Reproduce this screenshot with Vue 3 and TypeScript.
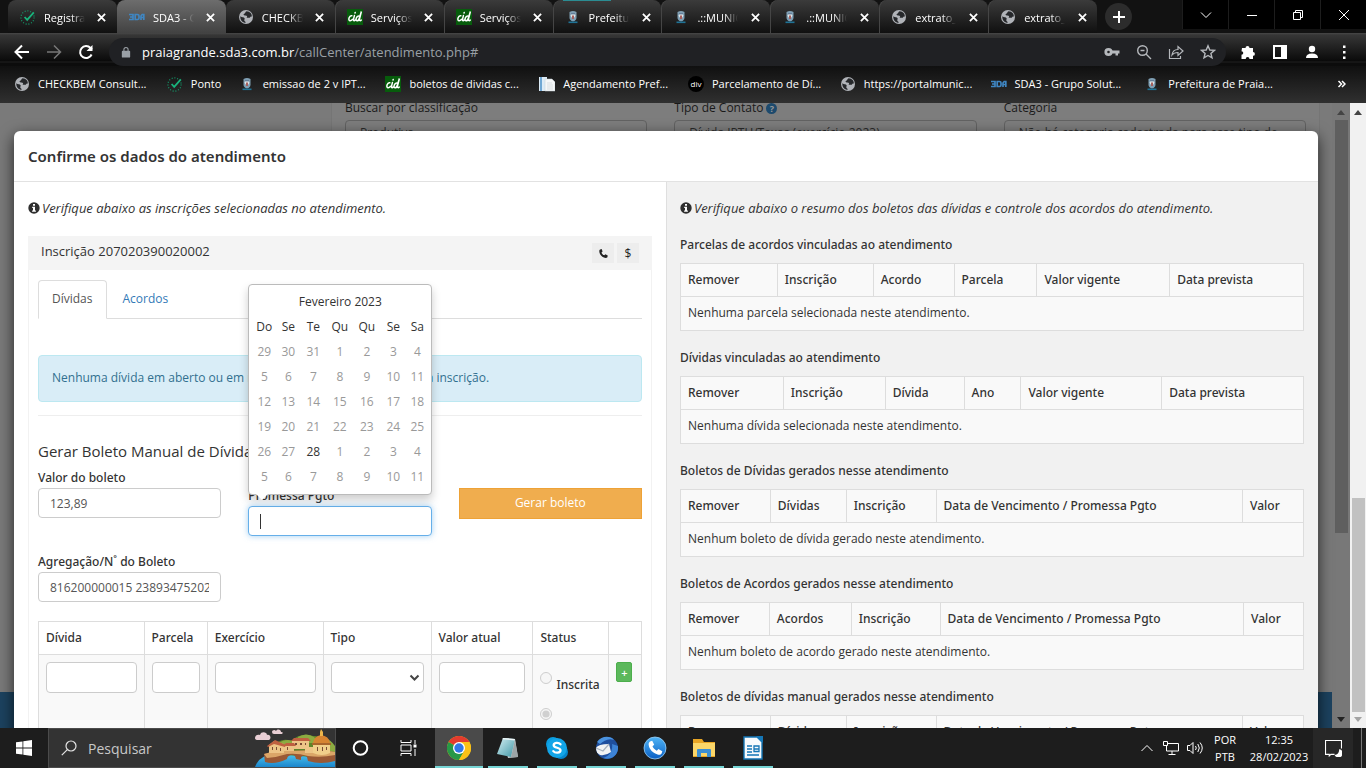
<script setup lang="ts">
interface Tab { icon: string; title: string; active?: boolean }
interface Summary { title: string; empty: string; cols: { label: string; w: number }[] }

const tabs: Tab[] = [
  { icon: 'check', title: 'Registrar ponto' },
  { icon: 'sda', title: 'SDA3 - Grupo Solution', active: true },
  { icon: 'globe', title: 'CHECKBEM Consulta' },
  { icon: 'cid', title: 'Serviços Online' },
  { icon: 'cid', title: 'Serviços Online' },
  { icon: 'crest', title: 'Prefeitura de Praia' },
  { icon: 'crest', title: '.::MUNICIPIO::.' },
  { icon: 'crest', title: '.::MUNICIPIO::.' },
  { icon: 'globe', title: 'extrato_debitos' },
  { icon: 'globe', title: 'extrato_debitos' },
]

const bookmarks = [
  { icon: 'globe', title: 'CHECKBEM Consult...' },
  { icon: 'check', title: 'Ponto' },
  { icon: 'crest', title: 'emissao de 2 v IPT...' },
  { icon: 'cid', title: 'boletos de dividas c...' },
  { icon: 'doc', title: 'Agendamento Pref...' },
  { icon: 'div', title: 'Parcelamento de Dí...' },
  { icon: 'globe', title: 'https://portalmunic...' },
  { icon: 'sda', title: 'SDA3 - Grupo Solut...' },
  { icon: 'crest', title: 'Prefeitura de Praia...' },
]

const filters = [
  { id: 'classificacao', label: 'Buscar por classificação', value: 'Produtiva', help: false },
  { id: 'contato', label: 'Tipo de Contato', value: 'Dívida IPTU/Taxas (exercício 2023)', help: true },
  { id: 'categoria', label: 'Categoria', value: 'Não há categoria cadastrada para esse tipo de', help: false },
]

const cols = (labels: string[], ws: number[]) => labels.map((label, i) => ({ label, w: ws[i] }))
const boletoCols = (second: string, ws: number[]) =>
  cols(['Remover', second, 'Inscrição', 'Data de Vencimento / Promessa Pgto', 'Valor'], ws)

const summaries: Summary[] = [
  {
    title: 'Parcelas de acordos vinculadas ao atendimento',
    empty: 'Nenhuma parcela selecionada neste atendimento.',
    cols: cols(['Remover', 'Inscrição', 'Acordo', 'Parcela', 'Valor vigente', 'Data prevista'], [97, 96, 81, 83, 133, 134]),
  },
  {
    title: 'Dívidas vinculadas ao atendimento',
    empty: 'Nenhuma dívida selecionada neste atendimento.',
    cols: cols(['Remover', 'Inscrição', 'Dívida', 'Ano', 'Valor vigente', 'Data prevista'], [103, 102, 79, 57, 141, 142]),
  },
  {
    title: 'Boletos de Dívidas gerados nesse atendimento',
    empty: 'Nenhum boleto de dívida gerado neste atendimento.',
    cols: boletoCols('Dívidas', [90, 76, 90, 307, 61]),
  },
  {
    title: 'Boletos de Acordos gerados nesse atendimento',
    empty: 'Nenhum boleto de acordo gerado neste atendimento.',
    cols: boletoCols('Acordos', [89, 82, 89, 304, 60]),
  },
  {
    title: 'Boletos de dívidas manual gerados nesse atendimento',
    empty: 'Nenhum boleto manual gerado neste atendimento.',
    cols: boletoCols('Dívidas', [90, 76, 90, 307, 61]),
  },
]

const share = (s: Summary, w: number) => ({ width: (w / s.cols.reduce((a, c) => a + c.w, 0)) * 100 + '%' })

const weekdays = ['Do', 'Se', 'Te', 'Qu', 'Qu', 'Se', 'Sa']
const weeks = [
  [29, 30, 31, 1, 2, 3, 4],
  [5, 6, 7, 8, 9, 10, 11],
  [12, 13, 14, 15, 16, 17, 18],
  [19, 20, 21, 22, 23, 24, 25],
  [26, 27, 28, 1, 2, 3, 4],
  [5, 6, 7, 8, 9, 10, 11],
]

const apps = ['chrome', 'notepad', 'skype', 'thunderbird', 'phoneapp', 'folder', 'writer']
</script>

<template>
  <svg class="sprite" aria-hidden="true">
    <defs>
      <linearGradient id="gBlue" x1="0" y1="0" x2="0" y2="1"><stop offset="0" stop-color="#4fb4f5" /><stop offset="1" stop-color="#0a5fc4" /></linearGradient>
      <linearGradient id="gNote" x1="0" y1="0" x2="1" y2="1"><stop offset="0" stop-color="#d6f0f4" /><stop offset="1" stop-color="#3f97a6" /></linearGradient>
      <linearGradient id="gSea" x1="0" y1="0" x2="0" y2="1"><stop offset="0" stop-color="#4cc3ee" /><stop offset="1" stop-color="#1b86cc" /></linearGradient>
    </defs>
    <symbol id="check" viewBox="0 0 16 16"><circle cx="7.500" cy="8.500" r="6.600" fill="none" stroke="#129b6b" stroke-width="1.200" stroke-dasharray="1 1.800" /><path d="M4.600 8l2.600 2.800L13.800 3.400" fill="none" stroke="#19b37c" stroke-width="1.800" /></symbol>
    <symbol id="sda" viewBox="0 0 16 16"><path d="M0 5.500h4v5H0M1 8h3M6.200 5.500h2.300q1.500 0 1.500 1.500v2q0 1.500-1.500 1.500H6.200zM12 11V7l1.200-1.500h1.600V11M12 8.500h3" fill="none" stroke="#3f86c2" stroke-width="1.700" /></symbol>
    <symbol id="globe" viewBox="0 0 16 16"><circle cx="8" cy="8" r="7" fill="#b0b3b8" /><path d="M8.500 2.200c-1.800.8-.7 2-2.300 2.600-1.400.6-.4 1.900.9 1.800 2.200-.1 2.600 1 1.500 2.100h3.200c.6-1.200 1.200-1.300 2-1 .3-2.700-1.500-5.200-5.300-5.500zM2.300 7.200c1.500 1.600 3.700.6 4.300 2.100.3 1-.6 1.600-.2 2.500.3.900 1.300.7 1.300 2-3.200 0-5.700-2.800-5.400-6.600z" fill="#26282b" /></symbol>
    <symbol id="cid" viewBox="0 0 16 16"><rect width="16" height="16" fill="#075c0c" /><path d="M4.800 6.800c-2.200-.8-4.300 4.200-1.800 5 1 .2 1.800-.6 2.400-1.400M7.400 6.600l-1 4c-.2 1.500 1.200 1.300 2 .2M8 4.100l.2-.6M12.400 7.200c-2.600-1.200-4.600 4.200-2.400 4.600 1.200.2 2.200-2 2.600-3.600l1.800-5.700-2 7.800c-.2 1.600 1 1.600 1.800.8" fill="none" stroke="#fff" stroke-width="1.500" stroke-linecap="round" /></symbol>
    <symbol id="crest" viewBox="0 0 16 16"><path d="M4.500 3q3.500-2 7 0v5.500q0 3-3.500 4-3.500-1-3.500-4z" fill="#7f9fb4" /><circle cx="8" cy="6.500" r="2.300" fill="#dfe6e8" /><path d="M6 4h4v1.400H6z" fill="#657f99" /><path d="M7 6.500h2v3.500H7z" fill="#a5605e" /><path d="M3.500 13.300h9" stroke="#1f7396" stroke-width="1.600" fill="none" /></symbol>
    <symbol id="doc" viewBox="0 0 16 16"><path d="M0 1h8v14H0z" fill="#dcebf6" /><path d="M1 1h2v14H1z" fill="#6fa7d3" /><path d="M6 3h7l3 3v9H6z" fill="#f5f7f8" stroke="#c3cdd4" stroke-width=".5" /><path d="M8 7h5M8 9h6M8 11h6M8 13h6" stroke="#cdd3d8" stroke-width=".7" /></symbol>
    <symbol id="div" viewBox="0 0 16 16"><circle cx="8" cy="8" r="8" fill="#000" /><text x="8" y="11" text-anchor="middle" font-size="8" font-family="Open Sans" fill="#fff">div</text></symbol>
    <symbol id="info" viewBox="0 0 12 12"><circle cx="6" cy="6" r="5.700" fill="#2e2e2e" /><path d="M5 2h2v1.700H5zM4.200 4.700H7v3.700h.9v1.400H4.100V8.400H5V6.100h-.8z" fill="#fff" /></symbol>
    <symbol id="phone" viewBox="0 0 12 12"><path d="M2.300 1.500L4 1.200l1 2.600-1.200 1c.6 1.500 1.500 2.500 3.100 3.200L8 6.900l2.600 1.200-.3 1.800c-.3.7-1 .9-1.900.9C4.600 10.600 1.400 7 1.400 3.200c0-.8.3-1.500.9-1.700z" fill="#222" /></symbol>
    <symbol id="chrome" viewBox="0 0 24 24"><circle cx="12" cy="12" r="12" fill="#fbc116" /><path d="M12 12L1.600 6A12 12 0 0 1 22.400 6z" fill="#e33b2e" /><path d="M1.600 6A12 12 0 0 0 12 24l5.200-9L12 12z" fill="#279847" /><path d="M12 6h10.400A12 12 0 0 1 12 24l5.200-9z" fill="#fbc116" /><circle cx="12" cy="12" r="6" fill="#fff" /><circle cx="12" cy="12" r="4.700" fill="#3177e8" /></symbol>
    <symbol id="notepad" viewBox="0 0 24 24"><path d="M7 2l12 1 3 18-10 1z" fill="#c9d0d2" /><path d="M7 2l12 1-4 18L1 18z" fill="url(#gNote)" /><path d="M7 2l12 1-.5 1.500L6.300 3.300z" fill="#eef6f7" /><path d="M19 4l3 17-7 .5z" fill="#9da5a7" /></symbol>
    <symbol id="skype" viewBox="0 0 24 24"><circle cx="8" cy="8" r="7" fill="#0a9de0" /><circle cx="16" cy="16" r="7" fill="#0585cc" /><circle cx="12" cy="12" r="10" fill="#12a5e8" /><path d="M15.500 8.300C13.500 6 8.500 6.500 8.700 9.300c.2 3 6.800 1.900 6.800 5 0 2.900-5.300 3.200-7.200.8" fill="none" stroke="#fff" stroke-width="2.300" stroke-linecap="round" /></symbol>
    <symbol id="thunderbird" viewBox="0 0 24 24"><circle cx="13" cy="12" r="11" fill="#1f4f9e" /><path d="M24 10c1 9-7 15-15 12 7-2 10-8 9-14z" fill="#3d83d6" /><path d="M3 6C8-1 17 0 20 4c-6-2-10 1-14 4z" fill="#4b93e0" /><path d="M2 12q2-4 13-4l2 8q-5 4-11 3-4-2-4-7z" fill="#f2f3f4" /><path d="M2 12l7 3 6-7" fill="none" stroke="#a9b3bf" stroke-width="1.200" /></symbol>
    <symbol id="phoneapp" viewBox="0 0 24 24"><circle cx="12" cy="12" r="11" fill="url(#gBlue)" stroke="#9ad0f7" stroke-width=".8" /><path d="M7 5.500l2.200-.7 2 4-1.700 1.500c.9 2 2.200 3.500 4.300 4.400l1.600-1.600 3.900 2.200-.7 2.300c-.8 1.300-2.300 1.500-4 1-4.700-1.400-8.200-5-8.900-9.500-.2-1.600.2-2.900 1.300-3.600z" fill="#fff" /></symbol>
    <symbol id="folder" viewBox="0 0 24 24"><path d="M1 3h9l2 3h11v15H1z" fill="#e8a525" /><path d="M1 7h22v13H1z" fill="#fbd669" /><path d="M5 21v-7q0-1 1-1h12q1 0 1 1v7h-4v-4H9v4z" fill="#3c8fd3" /></symbol>
    <symbol id="writer" viewBox="0 0 24 24"><path d="M3 1h13l5 5v17H3z" fill="#f7fafc" stroke="#1576b5" stroke-width="1.400" /><path d="M15 0h7v7z" fill="#1576b5" /><path d="M6 10h5M6 13h5M6 16h5M6 19h12M13 10h5v5.500h-5zM13 13h5" stroke="#1576b5" stroke-width="1.300" fill="none" /></symbol>
  </svg>

  <div class="screen">
    <header class="chrome">
      <div class="tabstrip">
        <div class="tabs">
          <div v-for="(t, i) in tabs" :key="i" class="tab" :class="{ active: t.active, sep: i > 2 }">
            <svg class="fav"><use :href="'#' + t.icon" /></svg>
            <span class="tabtitle">{{ t.title }}</span>
            <button class="close" aria-label="Fechar guia"><svg viewBox="0 0 10 10"><path d="M1 1l8 8M9 1L1 9" /></svg></button>
          </div>
        </div>
        <button class="newtab" aria-label="Nova guia"><svg viewBox="0 0 12 12"><path d="M6 0v12M0 6h12" /></svg></button>
        <div class="winbtns">
          <button aria-label="Pesquisar guias"><svg viewBox="0 0 12 12"><path d="M1 3.500l5 5 5-5" /></svg></button>
          <button aria-label="Minimizar"><svg viewBox="0 0 12 12"><path d="M1 6.500h10" /></svg></button>
          <button aria-label="Restaurar"><svg viewBox="0 0 12 12"><path d="M1.500 3.500h7v7h-7zM3.500 3.500v-2h7v7h-2" /></svg></button>
          <button aria-label="Fechar"><svg viewBox="0 0 12 12"><path d="M1 1l10 10M11 1L1 11" /></svg></button>
        </div>
      </div>
      <div class="toolbar">
        <button aria-label="Voltar"><svg viewBox="0 0 16 16" class="ic white"><path d="M15 8H2M8 1.500L1.500 8 8 14.500" /></svg></button>
        <button aria-label="Avançar"><svg viewBox="0 0 16 16" class="ic dim"><path d="M1 8h13M8 1.500L14.500 8 8 14.500" /></svg></button>
        <button aria-label="Recarregar"><svg viewBox="0 0 16 16" class="ic white"><path d="M13.600 10.500A6 6 0 1 1 12.500 4L14 5.500" /><path d="M14.500 1v6h-6z" class="solid" /></svg></button>
        <div class="omnibox">
          <svg class="lock" viewBox="0 0 12 14"><path d="M2 5h8q1 0 1 1v6q0 1-1 1H2q-1 0-1-1V6q0-1 1-1z" fill="#9aa0a6" /><path d="M3.500 6V3.500a2.500 2.500 0 0 1 5 0V6" fill="none" stroke="#9aa0a6" stroke-width="1.300" /></svg>
          <span class="url"><b>praiagrande.sda3.com.br</b>/callCenter/atendimento.php#</span>
          <button aria-label="Senhas"><svg viewBox="0 0 16 16" class="ic grey"><path d="M8 6.500h7.500v3H14v2h-2.500v-2H8z" class="solid" /><circle cx="4.500" cy="8" r="2.700" stroke-width="2.800" /></svg></button>
          <button aria-label="Zoom"><svg viewBox="0 0 16 16" class="ic grey"><circle cx="6.500" cy="6.500" r="4.800" /><path d="M10 10l5 5M4.500 6.500h4" /></svg></button>
          <button aria-label="Compartilhar"><svg viewBox="0 0 16 16" class="ic grey thin"><path d="M1.500 5v9.500h11V12M4 11c.5-4 3-5.500 6-5.500V2.500L15 7l-5 4.500V8.500c-3 0-4.500.5-6 2.500z" /></svg></button>
          <button aria-label="Favorito"><svg viewBox="0 0 16 16" class="ic grey"><path d="M8 1.800l1.800 4.200 4.600.4-3.500 3 1.100 4.500L8 11.500l-4 2.400 1.100-4.500-3.500-3 4.600-.4z" /></svg></button>
        </div>
        <button aria-label="Extensões"><svg viewBox="0 0 16 16" class="ic white"><path d="M2 4h3.500a2 2 0 1 1 4 0H13v4a1.900 1.900 0 1 1 0 3.800V15H9.500a1.900 1.900 0 1 0-3.800 0H1.500v-4.200a1.800 1.800 0 1 0 0-3.600z" class="solid" /></svg></button>
        <button aria-label="Painel lateral"><svg viewBox="0 0 16 16" class="ic white"><path d="M2 2h12v12H2z" stroke-width="2" /><path d="M9 2h5v12H9z" class="solid" /></svg></button>
        <button class="avatar" aria-label="Perfil"><svg viewBox="0 0 16 16" class="ic white"><circle cx="8" cy="5" r="3.200" class="solid" /><path d="M2 14q0-4.500 6-4.500t6 4.500z" class="solid" /></svg></button>
        <button aria-label="Menu"><svg viewBox="0 0 16 16" class="ic white"><path d="M7 1.500h2.500v2.500H7zM7 7h2.500v2.500H7zM7 12.500h2.500V15H7z" class="solid" /></svg></button>
      </div>
      <nav class="bookmarks">
        <a v-for="b in bookmarks" :key="b.title" href="#"><svg class="fav"><use :href="'#' + b.icon" /></svg>{{ b.title }}</a>
        <button class="more" aria-label="Mais favoritos"><svg viewBox="0 0 8 8"><path d="M1 1l3 3-3 3M4.500 1l3 3-3 3" /></svg></button>
      </nav>
    </header>

    <main class="page">
      <div class="under">
        <div class="underpanel">
          <div v-for="f in filters" :key="f.id" class="filter">
            <label :for="f.id">{{ f.label }}</label><span v-if="f.help" class="help">?</span>
            <select :id="f.id" disabled><option>{{ f.value }}</option></select>
          </div>
        </div>
        <div class="footerbar"></div>
      </div>
      <div class="bar inner"><i class="up"></i><span class="track"><b></b></span><i class="down"></i></div>
      <div class="bar outer"><i class="up"></i><span class="track"><b></b></span><i class="down off"></i></div>

      <section class="modal" role="dialog" aria-labelledby="modal-title">
        <h1 id="modal-title">Confirme os dados do atendimento</h1>
        <div class="columns">
          <div class="left">
            <p class="note"><svg><use href="#info" /></svg><em>Verifique abaixo as inscrições selecionadas no atendimento.</em></p>
            <div class="panel">
              <div class="panelhead">
                <span>Inscrição 207020390020002</span>
                <button aria-label="Telefone"><svg><use href="#phone" /></svg></button>
                <button aria-label="Valores">$</button>
              </div>
              <div class="panelbody">
                <div class="navtabs"><a href="#" class="on">Dívidas</a><a href="#">Acordos</a></div>
                <div class="alert">Nenhuma dívida em aberto ou em negociação foi encontrada para a inscrição.</div>
                <hr />
                <h2>Gerar Boleto Manual de Dívida</h2>
                <div class="formrow">
                  <div class="field"><label for="valor">Valor do boleto</label><input id="valor" type="text" value="123,89" /></div>
                  <div class="field date">
                    <label for="promessa">Promessa Pgto</label>
                    <div class="focused"><input id="promessa" type="text" /><span class="caret"></span></div>
                    <div class="calendar">
                      <table>
                        <colgroup><col class="w24" /><col class="w24" /><col class="w26" /><col class="w27" /><col class="w27" /><col class="w26" /><col class="w22" /></colgroup>
                        <thead>
                          <tr><th colspan="7">Fevereiro 2023</th></tr>
                          <tr><th v-for="(d, i) in weekdays" :key="i">{{ d }}</th></tr>
                        </thead>
                        <tbody>
                          <tr v-for="(w, i) in weeks" :key="i"><td v-for="d in w" :key="d" :class="{ today: d === 28 }">{{ d }}</td></tr>
                        </tbody>
                      </table>
                    </div>
                  </div>
                  <button class="generate">Gerar boleto</button>
                </div>
                <div class="formrow second">
                  <div class="field"><label for="agregacao">Agregação/N˚ do Boleto</label><input id="agregacao" type="text" value="816200000015 238934752029 302280000000" /></div>
                </div>
                <table class="grid debts">
                  <colgroup><col class="c1" /><col class="c2" /><col class="c3" /><col class="c4" /><col class="c5" /><col class="c6" /><col class="c7" /></colgroup>
                  <thead><tr><th>Dívida</th><th>Parcela</th><th>Exercício</th><th>Tipo</th><th>Valor atual</th><th>Status</th><th></th></tr></thead>
                  <tbody>
                    <tr>
                      <td><input type="text" aria-label="Dívida" /></td>
                      <td><input type="text" aria-label="Parcela" /></td>
                      <td><input type="text" aria-label="Exercício" /></td>
                      <td>
                        <div class="selectbox">
                          <select aria-label="Tipo"><option></option></select>
                          <svg viewBox="0 0 10 7"><path d="M1 1.500l4 4 4-4" /></svg>
                        </div>
                      </td>
                      <td><input type="text" aria-label="Valor atual" /></td>
                      <td>
                        <label class="radio"><input type="radio" name="status" disabled /><span>Inscrita</span></label>
                        <label class="radio next"><input type="radio" name="status" checked disabled /></label>
                      </td>
                      <td><button class="add">+</button></td>
                    </tr>
                  </tbody>
                </table>
              </div>
            </div>
          </div>
          <div class="right">
            <p class="note"><svg><use href="#info" /></svg><em>Verifique abaixo o resumo dos boletos das dívidas e controle dos acordos do atendimento.</em></p>
            <section v-for="s in summaries" :key="s.title" class="summary">
              <h3>{{ s.title }}</h3>
              <table class="grid">
                <colgroup><col v-for="c in s.cols" :key="c.label" :style="share(s, c.w)" /></colgroup>
                <thead><tr><th v-for="c in s.cols" :key="c.label">{{ c.label }}</th></tr></thead>
                <tbody><tr><td :colspan="s.cols.length">{{ s.empty }}</td></tr></tbody>
              </table>
            </section>
          </div>
        </div>
      </section>
    </main>

    <footer class="taskbar">
      <button class="start" aria-label="Iniciar"><svg viewBox="0 0 16 16"><path d="M0 2.300l6.500-.9v6.100H0zM7.300 1.300L16 0v7.500H7.300zM0 8.400h6.500v6.200L0 13.700zM7.300 8.400H16V16l-8.700-1.200z" fill="#fff" /></svg></button>
      <div class="search">
        <svg class="lens" viewBox="0 0 16 16"><circle cx="10" cy="6" r="5" /><path d="M6.300 9.700L0.800 15.200" /></svg>
        <input type="text" aria-label="Pesquisar" placeholder="Pesquisar" />
        <svg class="island" viewBox="0 0 80 38">
          <path d="M0 9c0-3 3-4 5-3 1-4 7-3 7 0 3-1 5 3 2 5H3Q0 11 0 9zM17 3c0-2 3-3 4-1 2-3 5-1 5 1q3 0 1 2h-8q-2 0-2-2z" fill="#e9cfd5" />
          <path d="M17 18Q26 8 36 12 46 3 58 7q14-1 22 12v14H18z" fill="#5f8429" />
          <path d="M22 15q10-7 18-2l5 4H18zM43 8q8-5 16 0l5 6H44zM70 9q6 2 10 8v6H68z" fill="#8cab41" />
          <path d="M0 38q5-14 24-13 26 3 56 4v9z" fill="url(#gSea)" />
          <path d="M9 25q12-4 23-3l36-1 12 2v9q-14 4-27 0l-1-4q-3-3-6 0v3l-5-1q-1-5-5-4-4 1-4 4-12 6-22 3z" fill="#9a5935" />
          <path d="M9 25q12-4 23-3l36-1 12 2v3q-14 3-27 1-10-3-21-2-9 3-20 4z" fill="#dba668" />
          <path d="M14 16l5-4 10 3v9H14zM37 11h17v9H37zM29 16h10v6H29zM50 18h10v6H50z" fill="#edc587" />
          <path d="M12 17l8-6 11 5-1 2-11-3-6 3zM36 12l3-3h14l3 3zM28 17l3-3h8l2 3z" fill="#bf6040" />
          <path d="M58 15h17v9q-8 4-17 0z" fill="#f1cf8b" /><path d="M58 14q1-7 8-8 8 1 9 8z" fill="#d78432" /><path d="M65 3l1-3 2 3v4h-3z" fill="#edb54b" /><path d="M57 14h19v2H57z" fill="#a9652c" />
          <path d="M17 18h1v3h-1zM21 18h1v3h-1zM25 19h1v3h-1zM40 14h2v2h-2zM45 14h2v2h-2zM50 14h1v2h-1zM32 18h1v3h-1zM62 18h1v4h-1zM67 18h1v4h-1zM71 18h1v3h-1z" fill="#7a4b36" />
        </svg>
      </div>
      <button class="tb" aria-label="Cortana"><svg viewBox="0 0 16 16"><circle cx="8" cy="8" r="6.800" fill="none" stroke="#fff" stroke-width="2" /></svg></button>
      <button class="tb" aria-label="Visão de tarefas"><svg viewBox="0 0 16 16"><path d="M.5 0v2.500h10V0M.5 5h10v6H.5zM.5 16v-2.500h10V16M14.500 0v4M14.500 9v7" fill="none" stroke="#fff" /><path d="M13 4.500h3v3h-3z" fill="#fff" /></svg></button>
      <div class="apps">
        <button v-for="(a, i) in apps" :key="a" :class="{ current: i === 0 }" :aria-label="a"><svg><use :href="'#' + a" /></svg></button>
      </div>
      <div class="tray">
        <button aria-label="Ícones ocultos"><svg viewBox="0 0 16 16"><path d="M2.500 11L8 5.500l5.500 5.500" /></svg></button>
        <button aria-label="Rede"><svg viewBox="0 0 16 16"><path d="M4 3.500h11.500v7.500H3.500V6M.5 1.500h4v4h-4zM9 11v3.500M5.500 14.500h7" /></svg></button>
        <button aria-label="Volume"><svg viewBox="0 0 16 16"><path d="M.5 5.500h2.500l3-3v11l-3-3H.5zM8.500 6q1.500 2 0 4M10.800 4q3 4 0 8M13 2.500q4.500 5.500 0 11" /></svg></button>
      </div>
      <div class="lang"><span>POR</span><span>PTB</span></div>
      <div class="clock"><span>12:35</span><span>28/02/2023</span></div>
      <button class="notif" aria-label="Notificações"><svg viewBox="0 0 16 16"><path d="M9 13.500l-3.500 0-1.500 1.500v-1.500H.5v-13h15V8" fill="none" stroke="#fff" /><path d="M13.500 8.500a4 4 0 1 1-4.500 5.500q4 0 4.500-5.500z" fill="#fff" /></svg></button>
      <div class="peek"></div>
    </footer>
  </div>
</template>

<style>
html, body { margin: 0; overflow: hidden; background: #7d7d7d; }
</style>

<style scoped>
* { box-sizing: border-box; }
button { border: 0; padding: 0; margin: 0; background: none; font: inherit; color: inherit; display: flex; align-items: center; justify-content: center; flex: none; }
a { text-decoration: none; color: inherit; }
svg { flex: none; display: block; }
.sprite { position: absolute; width: 0; height: 0; }
.screen { height: 100vh; display: flex; flex-direction: column; overflow: hidden; font-family: "Open Sans", "Noto Sans", sans-serif; font-size: 12px; color: #333; }

.chrome { flex: none; color: #fff; font-size: 11px; background: #161616; }
.tabstrip { height: 33px; display: flex; padding-left: 8px; background: #121212; }
.tabs { display: flex; flex: 0 1 1089px; min-width: 0; height: 33px; }
.tab { flex: 1 1 0; min-width: 0; display: flex; align-items: center; padding: 1px 10px 0 12px; background: linear-gradient(#3b3b3b, #101010); border-radius: 8px 8px 0 0; }
.tab.sep { box-shadow: inset 1px 0 #454545; }
.tab.active { background: linear-gradient(#6d6d6d, #424242); }
.tab:nth-child(6) { background: linear-gradient(#2b8c92, #2b8c92) 10px 0 / 48px 1px no-repeat, linear-gradient(#3b3b3b, #101010); }
.fav { width: 16px; height: 16px; margin-right: 8px; }
.tabtitle { flex: 1; min-width: 0; overflow: hidden; white-space: nowrap; -webkit-mask-image: linear-gradient(90deg, #000 65%, transparent); mask-image: linear-gradient(90deg, #000 65%, transparent); }
.close { width: 10px; height: 10px; margin-left: 12px; }
.close svg { width: 9px; height: 9px; fill: none; stroke: #fff; stroke-width: 2; }
.newtab { width: 27px; height: 27px; border-radius: 50%; background: #2c2c2c; margin: 3px 0 0 8px; }
.newtab svg { width: 12px; height: 12px; stroke: #fff; stroke-width: 2; }
.winbtns { margin-left: auto; display: flex; height: 29px; background: #000; }
.winbtns button { width: 46px; border-left: 1px solid #1d1d1d; }
.winbtns svg { width: 12px; height: 12px; fill: none; stroke: #fff; }
.toolbar { height: 33px; display: flex; align-items: center; padding: 5px 10px 0 10px; background: linear-gradient(#474747 0, #363636 2px, #0a0a0a 28px, #202020 29px, #0c0c0c 30px); }
.toolbar > button { width: 24px; height: 28px; margin-right: 8px; }
.toolbar > button:last-child { margin-right: 0; }
.ic { width: 16px; height: 16px; fill: none; stroke-width: 2; }
.ic.white { stroke: #fff; }
.ic.dim { stroke: #777; stroke-width: 1.5; }
.ic.grey { stroke: #b5b8bc; stroke-width: 1.4; }
.ic.thin { stroke-width: 1.2; }
.ic .solid { stroke: none; fill: #fff; }
.ic.grey .solid { fill: #b5b8bc; }
.omnibox { flex: 1; min-width: 0; height: 28px; display: flex; align-items: center; background: #202124; border-radius: 14px; margin: 0 10px 0 3px; padding: 0 6px 0 12px; }
.omnibox button { width: 24px; margin-left: 8px; }
.lock { width: 10px; height: 13px; margin-right: 11px; }
.url { flex: 1; font-size: 13px; color: #9aa0a6; white-space: nowrap; }
.url b { font-weight: 400; color: #fff; }
.bookmarks { height: 37px; display: grid; grid-template-columns: 153fr 72fr 147fr 154fr 149fr 152fr 151fr 154fr 190fr 16px; align-items: center; padding: 0 16px 2px 14px; background: linear-gradient(#101010, #303030); }
.bookmarks a { display: flex; align-items: center; white-space: nowrap; min-width: 0; }
.more svg { width: 9px; height: 8px; fill: none; stroke: #fff; stroke-width: 1.500; }

.page { flex: 1; min-height: 0; display: flex; position: relative; overflow: hidden; background: #7a7a7a; }
.under { flex: 1; min-width: 0; display: flex; flex-direction: column; }
.underpanel { flex: 1; display: grid; grid-template-columns: repeat(3, 1fr); gap: 27px; align-items: start; margin: 0 12px 0 331px; padding: 0 13px; background: #7d7d7d; border: solid #757575; border-width: 0 1px; }
.filter label { display: inline-block; height: 14px; line-height: 10px; color: #191919; vertical-align: top; }
.help { display: inline-block; vertical-align: top; width: 11px; height: 11px; line-height: 11px; border-radius: 50%; background: #1d4a6d; color: #999; text-align: center; font-size: 9px; font-weight: 700; margin-left: 3px; }
.filter select { display: block; width: 100%; height: 30px; border: 1px solid #626262; border-radius: 4px; background: transparent; color: #2b2b2b; opacity: 1; padding: 0 0 6px 10px; font: inherit; }
.footerbar { flex: none; height: 36px; background: #1c425f; }
.bar { flex: none; width: 16px; display: flex; flex-direction: column; align-items: center; justify-content: space-between; padding: 7px 0 6px; }
.bar i { width: 0; border: 4px solid transparent; }
.bar .up { border-top: 0; border-bottom: 5px solid #444; }
.bar .down { border-bottom: 0; border-top: 5px solid #222; }
.bar .down.off { border-top-color: #a3a3a3; }
.track { flex: 1; width: 13px; margin: 5px 0; display: flex; flex-direction: column; }
.track b { background: #5f5f5f; flex: 412; }
.inner { width: 18px; background: #787878; }
.inner .track::after { content: ""; flex: 179; }
.outer { background: #f1f1f1; }
.outer .track::before { content: ""; flex: 377; }
.outer .track b { flex: 214; background: #c1c1c1; }

.modal { position: absolute; top: 28px; left: 14px; right: 48px; background: #fff; border-radius: 6px; box-shadow: 0 5px 15px rgba(0, 0, 0, .7); overflow: clip; }
h1 { margin: 0; height: 51px; line-height: 50px; padding-left: 14px; font-family: "Noto Sans", sans-serif; font-size: 15px; font-weight: 600; border-bottom: 1px solid #e2e2e2; }
.columns { display: grid; grid-template-columns: 1fr 1fr; }
.left { padding: 16px 14px; min-width: 0; }
.right { padding: 16px 14px 14px 13px; min-width: 0; background: #f1f1f1; border-left: 1px solid #dfdfdf; }
.note { margin: 0; height: 20px; line-height: 20px; display: flex; align-items: center; gap: 2px; white-space: nowrap; font-size: 13px; }
.note svg { width: 12px; height: 12px; }
.panel { margin-top: 18px; }
.panelhead { height: 34px; display: flex; align-items: center; gap: 3px; padding: 0 13px; background: #f4f4f4; }
.panelhead span { flex: 1; padding-bottom: 4px; font-size: 13px; }
.panelhead button { width: 22px; height: 20px; background: #ededed; color: #222; }
.panelhead svg { width: 11px; height: 11px; }
.panelbody { border: solid #f2f2f2; border-width: 0 1px; padding: 10px 9px; }
.navtabs { display: flex; height: 39px; border-bottom: 1px solid #ddd; }
.navtabs a { height: 39px; line-height: 36px; padding: 0 13px; border: 1px solid transparent; color: #337ab7; margin-right: 2px; }
.navtabs a.on { color: #555; border-color: #ddd #ddd #fff; border-radius: 4px 4px 0 0; background: #fff; }
.alert { margin-top: 36px; height: 47px; line-height: 44px; padding-left: 13px; border: 1px solid #bce8f1; border-radius: 4px; background: #d9edf7; color: #31708f; white-space: nowrap; overflow: hidden; }
hr { margin: 13px 0 0; border: 0; border-top: 1px solid #eee; }
h2 { margin: 25px 0 7px; font-size: 15px; line-height: 20px; font-weight: 400; white-space: nowrap; }
.formrow { display: grid; grid-template-columns: repeat(3, 1fr); gap: 27px; align-items: start; }
.formrow.second { margin-top: 16px; }
.field { min-width: 0; position: relative; }
.field label { display: block; height: 20px; line-height: 20px; white-space: nowrap; font-family: "Noto Sans", sans-serif; font-weight: 500; }
input[type="text"], select { display: block; width: 100%; height: 30px; border: 1px solid #ccc; border-radius: 4px; background: #fff; font: inherit; color: #555; padding: 0 11px; outline: none; }
.date { margin-top: 18px; }
.focused { position: relative; }
.focused input { border-color: #66afe9; box-shadow: 0 0 6px rgba(102, 175, 233, .6); }
.caret { position: absolute; left: 12px; top: 8px; width: 1px; height: 15px; background: #333; }
.generate { height: 31px; margin-top: 20px; padding-bottom: 2px; background: #f0ad4e; border: 1px solid #eea236; color: #fff; }
.calendar { position: absolute; left: 0; right: 0; bottom: 41px; padding: 4px 3px 5px; background: #fff; border: 1px solid #bbb; border-radius: 4px; box-shadow: 0 5px 10px rgba(0, 0, 0, .2); z-index: 2; }
.calendar::after { content: ""; position: absolute; left: 7px; top: 100%; border: 6px solid transparent; border-top-color: #fff; border-bottom: 0; }
.calendar table { width: 100%; table-layout: fixed; border-collapse: collapse; text-align: center; }
.calendar th, .calendar td { height: 25px; padding: 0; line-height: 20px; font-weight: 500; color: #333; }
.calendar td { color: #999; font-weight: 400; }
.calendar td.today { color: #333; }
.w22 { width: 22px; } .w24 { width: 24px; } .w26 { width: 26px; } .w27 { width: 27px; }
.grid { width: 100%; table-layout: fixed; border-collapse: collapse; background: #f9f9f9; }
.grid th, .grid td { border: 1px solid #ddd; padding: 0 7px 2px; height: 34px; text-align: left; white-space: nowrap; }
.grid th { height: 33px; font-family: "Noto Sans", sans-serif; font-weight: 500; }
.grid td { font-weight: 400; }
.debts { margin-top: 19px; }
.debts th { background: #fff; }
.grid.debts td { vertical-align: top; padding: 7px; height: 110px; }
.debts input[type="text"], .debts select { height: 31px; }
.c1 { width: 17.5%; } .c2 { width: 10.5%; } .c3 { width: 19.2%; } .c4 { width: 17.9%; } .c5 { width: 16.9%; } .c6 { width: 12.6%; } .c7 { width: 5.4%; }
.selectbox { position: relative; }
.selectbox select { appearance: none; }
.selectbox svg { position: absolute; right: 4px; top: 12px; width: 11px; height: 7px; fill: none; stroke: #444; stroke-width: 2; pointer-events: none; }
.radio { display: flex; align-items: flex-start; gap: 4px; height: 36px; line-height: 20px; padding-top: 8px; font-family: "Noto Sans", sans-serif; font-weight: 500; }
.radio input { margin: 2px 0 0; width: 12px; height: 12px; }
.radio span { padding-top: 5px; }
.add { width: 16px; height: 20px; border-radius: 2px; background: #5cb85c; border: 1px solid #4cae4c; color: #fff; font-size: 11px; font-weight: 600; }
.summary { margin-top: 16px; }
h3 { margin: 0 0 8px; font-family: "Noto Sans", sans-serif; font-size: 12px; line-height: 21px; font-weight: 500; }

.taskbar { flex: none; height: 40px; display: flex; align-items: stretch; background: #1d1d1d; color: #fff; }
.start { width: 48px; }
.start svg { width: 16px; height: 16px; }
.search { width: 288px; display: flex; align-items: center; background: #333; border: 1px solid #4b4b4b; padding-left: 12px; }
.lens { width: 16px; height: 16px; fill: none; stroke: #e4e4e4; stroke-width: 1.200; }
.search input { flex: 1; width: 0; border: 0; background: none; height: 30px; font-size: 14px; padding: 0 0 0 11px; color: #ccc; }
.search input::placeholder { color: #c8c8c8; opacity: 1; }
.island { width: 80px; height: 38px; }
.tb { width: 48px; }
.tb svg { width: 17px; height: 16px; }
.apps { display: flex; gap: 1px; margin-left: 3px; }
.apps button { width: 48px; border: solid transparent; border-width: 0 4px; background: linear-gradient(#76d5d5, #76d5d5) bottom / 100% 2px no-repeat content-box; }
.apps button.current { background-color: #4a4a4a; background-clip: border-box; border-width: 0; }
.apps svg { width: 24px; height: 24px; }
.tray { margin-left: auto; display: flex; gap: 8px; }
.tray svg { width: 16px; height: 16px; fill: none; stroke: #fff; }
.lang, .clock { display: flex; flex-direction: column; justify-content: center; align-items: center; font-size: 11px; line-height: 17px; }
.lang { width: 40px; margin-left: 2px; }
.clock { width: 68px; }
.notif { width: 40px; background: #272727; }
.notif svg { width: 17px; height: 17px; }
.peek { width: 5px; border-left: 1px solid #777; margin-left: 8px; }
</style>
